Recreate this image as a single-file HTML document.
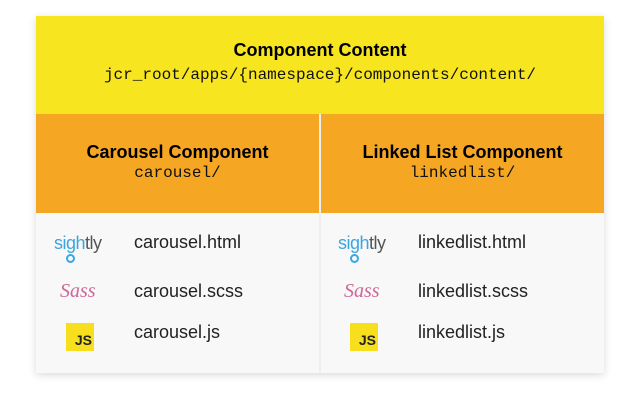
<!DOCTYPE html><html><head><style>
body{margin:0;background:#fff;width:640px;height:400px;overflow:hidden;font-family:"Liberation Sans",sans-serif}
.card{position:absolute;left:36px;top:16px;width:568px;height:357px;background:#f8f8f8;box-shadow:0 2px 8px rgba(0,0,0,.15)}
.top{position:absolute;left:0;top:0;width:568px;height:98px;background:#f7e51f;text-align:center}
.h{font-weight:bold;font-size:18px;color:#000}
.m{font-family:"Liberation Mono",monospace;font-size:16px;color:#111}
.col{position:absolute;top:98px;width:283px;height:99px;background:#f5a623;text-align:center}
.div{position:absolute;left:283px;top:98px;width:2px;height:259px;background:rgba(0,0,0,.04)}
.t{position:absolute;font-size:18px;color:#222;font-weight:300}
.js{position:absolute;width:28px;height:28px;background:#f7df1e;font-weight:bold;font-size:14px;color:#222;text-align:right;box-sizing:border-box;padding:9px 2px 0 0;line-height:17px}
.sl{position:absolute;font-size:18px;color:#3aa6e0;letter-spacing:-0.5px}
.sl b{color:#555;font-weight:normal}
.sass{position:absolute;font-family:"Liberation Serif",serif;font-style:italic;font-size:20px;color:#cd6799}
</style></head><body><div class="card">
<div class="top"><div class="h" style="padding-top:24px">Component Content</div><div class="m" style="margin-top:5px">jcr_root/apps/{namespace}/components/content/</div></div>
<div class="col" style="left:0"><div class="h" style="padding-top:28px">Carousel Component</div><div class="m" style="margin-top:1px">carousel/</div></div>
<div class="col" style="left:285px"><div class="h" style="padding-top:28px">Linked List Component</div><div class="m" style="margin-top:1px">linkedlist/</div></div>
<div class="div"></div>
<div class="sl" style="left:18px;top:217px">sigh<b>tly</b></div>
<div style="position:absolute;left:30px;top:238px;width:5px;height:5px;border:2px solid #3aa6e0;border-radius:50%"></div>
<div class="sass" style="left:24px;top:264px">Sass</div>
<div class="js" style="left:30px;top:307px">JS</div>
<div class="t" style="left:98px;top:216px">carousel.html</div>
<div class="t" style="left:98px;top:265px">carousel.scss</div>
<div class="t" style="left:98px;top:306px">carousel.js</div>
<div class="sl" style="left:302px;top:217px">sigh<b>tly</b></div>
<div style="position:absolute;left:314px;top:238px;width:5px;height:5px;border:2px solid #3aa6e0;border-radius:50%"></div>
<div class="sass" style="left:308px;top:264px">Sass</div>
<div class="js" style="left:314px;top:307px">JS</div>
<div class="t" style="left:382px;top:216px">linkedlist.html</div>
<div class="t" style="left:382px;top:265px">linkedlist.scss</div>
<div class="t" style="left:382px;top:306px">linkedlist.js</div>
</div></body></html>
